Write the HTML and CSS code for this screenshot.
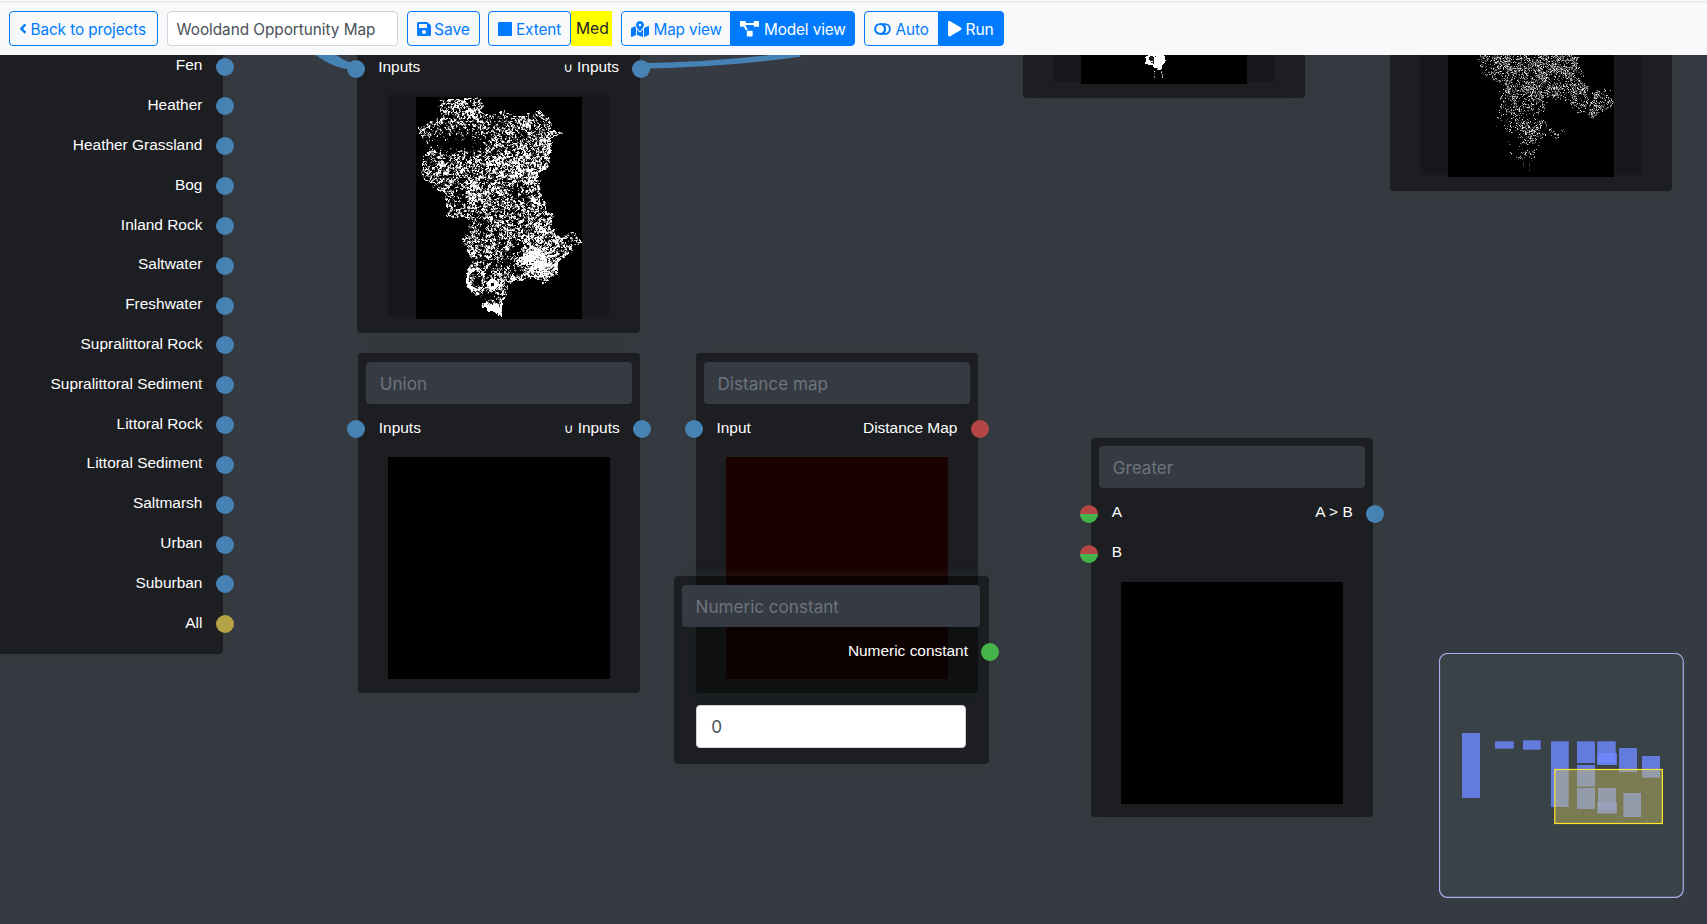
FILE: index.html
```html
<!DOCTYPE html>
<html lang="en">
<head>
<meta charset="utf-8">
<title>Wooldand Opportunity Map</title>
<link rel="stylesheet" href="styles.css">
</head>
<body>
<header class="toolbar">
  <button class="btn back"><svg class="ic" width="8" height="15.4" viewBox="0 0 256 512"><path d="M31.7 239l136-136c9.4-9.4 24.6-9.4 33.9 0l22.6 22.6c9.4 9.4 9.4 24.6 0 33.9L127.9 256l96.4 96.4c9.4 9.4 9.4 24.6 0 33.9L201.7 409c-9.4 9.4-24.6 9.4-33.9 0l-136-136c-9.5-9.4-9.5-24.6-.1-34z"/></svg><span>Back to projects</span></button>
  <div class="name">Wooldand Opportunity Map</div>
  <button class="btn save"><svg class="ic" width="14" height="16" viewBox="0 0 448 512"><path d="M433.941 129.941l-83.882-83.882A48 48 0 0 0 316.118 32H48C21.49 32 0 53.49 0 80v352c0 26.51 21.49 48 48 48h352c26.51 0 48-21.49 48-48V163.882a48 48 0 0 0-14.059-33.941zM224 416c-35.346 0-64-28.654-64-64 0-35.346 28.654-64 64-64s64 28.654 64 64c0 35.346-28.654 64-64 64zm96-304.52V212c0 6.627-5.373 12-12 12H76c-6.627 0-12-5.373-12-12V108c0-6.627 5.373-12 12-12h228.52c3.183 0 6.235 1.264 8.485 3.515l3.48 3.48A11.996 11.996 0 0 1 320 111.48z"/></svg><span>Save</span></button>
  <div class="group extent-group">
    <button class="btn extent"><svg class="ic" width="14" height="14" viewBox="0 0 14 14"><rect width="14" height="14" rx="0.8"/></svg><span>Extent</span></button>
    <span class="med">Med</span>
  </div>
  <div class="group views">
    <button class="btn mapview"><svg class="ic" width="18" height="16" viewBox="0 0 576 512"><path d="M288 0c-69.59 0-126 56.41-126 126 0 56.26 82.35 158.8 113.9 196.02 6.39 7.54 17.82 7.54 24.2 0C331.65 284.8 414 182.26 414 126 414 56.41 357.59 0 288 0zm0 168c-23.2 0-42-18.8-42-42s18.8-42 42-42 42 18.8 42 42-18.8 42-42 42zM20.12 215.95A32.006 32.006 0 0 0 0 245.66v250.32c0 11.32 11.43 19.06 21.94 14.86L160 448V214.92c-8.84-15.98-16.07-31.54-21.25-46.42L20.12 215.95zM288 359.67c-14.07 0-27.38-6.18-36.51-16.96-19.66-23.2-40.57-49.62-59.49-76.72v182l192 64V266c-18.92 27.09-39.82 53.52-59.49 76.72-9.13 10.77-22.44 16.95-36.51 16.95zm266.06-198.51L416 224v288l139.88-55.95A31.996 31.996 0 0 0 576 426.34V176.02c0-11.32-11.43-19.06-21.94-14.86z"/></svg><span>Map view</span></button>
    <button class="btn on modelview"><svg class="ic" width="19.5" height="15.6" viewBox="0 0 640 512"><path d="M384 320H256c-17.67 0-32 14.33-32 32v128c0 17.67 14.33 32 32 32h128c17.67 0 32-14.33 32-32V352c0-17.67-14.33-32-32-32zM192 32c0-17.67-14.33-32-32-32H32C14.33 0 0 14.33 0 32v128c0 17.67 14.33 32 32 32h95.72l73.16 128.04C211.98 300.98 232.4 288 256 288h.28L192 175.51V128h256V64H192V32zM608 0H480c-17.67 0-32 14.33-32 32v128c0 17.67 14.33 32 32 32h128c17.67 0 32-14.33 32-32V32c0-17.67-14.33-32-32-32z"/></svg><span>Model view</span></button>
  </div>
  <div class="group run-group">
    <button class="btn auto"><svg class="ic line" width="17" height="12" viewBox="0 0 17 12"><circle cx="6" cy="6" r="4.9"/><path d="M6 1.1H11a4.9 4.9 0 0 1 0 9.8H6M8.6 1.7a4.9 4.9 0 0 1 0 8.6"/></svg><span>Auto</span></button>
    <button class="btn on run"><svg class="ic" width="13.5" height="15.4" viewBox="0 0 448 512"><path d="M424.4 214.7L72.4 6.6C43.8-10.3 0 6.1 0 47.9V464c0 37.5 40.7 60.1 72.4 41.3l352-208c31.4-18.5 31.5-64.1 0-82.6z"/></svg><span>Run</span></button>
  </div>
</header>

<main class="editor">
  <svg class="wires" width="1707" height="869" viewBox="0 55 1707 869"><path d="M315 54.5C327 63.5 340 69.8 356 69.5V63.5C349 62.5 342 60 336 54.5Z"/><path class="line" d="M641 66Q725 64.5 800 54"/></svg>

  <section class="node layers">
    <div class="row"><span></span><span>Fen</span><i class="dot out"></i></div>
    <div class="row"><span></span><span>Heather</span><i class="dot out"></i></div>
    <div class="row"><span></span><span>Heather Grassland</span><i class="dot out"></i></div>
    <div class="row"><span></span><span>Bog</span><i class="dot out"></i></div>
    <div class="row"><span></span><span>Inland Rock</span><i class="dot out"></i></div>
    <div class="row"><span></span><span>Saltwater</span><i class="dot out"></i></div>
    <div class="row"><span></span><span>Freshwater</span><i class="dot out"></i></div>
    <div class="row"><span></span><span>Supralittoral Rock</span><i class="dot out"></i></div>
    <div class="row"><span></span><span>Supralittoral Sediment</span><i class="dot out"></i></div>
    <div class="row"><span></span><span>Littoral Rock</span><i class="dot out"></i></div>
    <div class="row"><span></span><span>Littoral Sediment</span><i class="dot out"></i></div>
    <div class="row"><span></span><span>Saltmarsh</span><i class="dot out"></i></div>
    <div class="row"><span></span><span>Urban</span><i class="dot out"></i></div>
    <div class="row"><span></span><span>Suburban</span><i class="dot out"></i></div>
    <div class="row"><span></span><span>All</span><i class="dot out gold"></i></div>
  </section>

  <section class="node union-a">
    <div class="title"></div>
    <div class="row"><i class="dot in"></i><span>Inputs</span><span><small>∪</small> Inputs</span><i class="dot out"></i></div>
    <div class="preview map"><canvas id="map-union" width="166" height="222"></canvas></div>
  </section>

  <section class="node result-a">
    <div class="preview map"><canvas id="map-area" width="166" height="222"></canvas></div>
  </section>

  <section class="node result-b">
    <div class="preview map"><canvas id="map-sparse" width="166" height="222"></canvas></div>
  </section>

  <section class="node union-b">
    <div class="title">Union</div>
    <div class="row"><i class="dot in"></i><span>Inputs</span><span><small>∪</small> Inputs</span><i class="dot out"></i></div>
    <div class="preview black"></div>
  </section>

  <section class="node distance">
    <div class="title">Distance map</div>
    <div class="row"><i class="dot in"></i><span>Input</span><span>Distance Map</span><i class="dot out red"></i></div>
    <div class="preview maroon"></div>
  </section>

  <section class="node numeric">
    <div class="title">Numeric constant</div>
    <div class="row"><span></span><span>Numeric constant</span><i class="dot out green"></i></div>
    <div class="value">0</div>
  </section>

  <section class="node greater">
    <div class="title">Greater</div>
    <div class="row"><i class="dot in split"></i><span>A</span><span>A &gt; B</span><i class="dot out"></i></div>
    <div class="row"><i class="dot in split"></i><span>B</span></div>
    <div class="preview black"></div>
  </section>

  <svg class="minimap" width="246" height="246" viewBox="1439 653 246 246">
    <rect class="mm-frame" x="1439.5" y="653.5" width="243.8" height="243.8" rx="8"/>
    <g class="mm-node">
      <rect x="1462" y="733" width="18" height="65"/>
      <rect x="1495" y="741.3" width="18.7" height="7.4"/>
      <rect x="1523" y="740.3" width="17.7" height="9.4"/>
      <rect x="1551" y="741.3" width="17.7" height="65.7"/>
      <rect x="1577" y="741.3" width="18" height="21.7"/>
      <rect x="1597.3" y="741.3" width="18.4" height="22"/>
      <rect x="1597.3" y="753" width="19.6" height="12"/>
      <rect x="1619" y="748" width="18" height="24"/>
      <rect x="1642" y="756" width="18" height="21.7"/>
      <rect x="1577" y="765" width="18" height="21.7"/>
      <rect x="1577" y="788" width="18" height="21"/>
      <rect x="1598" y="788" width="18" height="21.5"/>
      <rect x="1597.3" y="802" width="19.6" height="11.7"/>
      <rect x="1623.3" y="793" width="17.7" height="24"/>
    </g>
    <rect class="mm-view" x="1554.8" y="769.5" width="107.6" height="54"/>
  </svg>
</main>
<script src="maps.js"></script>
</body>
</html>
```

FILE: styles.css
```css
* { box-sizing: border-box; }
body {
  margin: 0;
  width: 1707px;
  height: 924px;
  overflow: hidden;
  display: flex;
  flex-direction: column;
  background: #363a42;
  font-family: Inter, "Liberation Sans", sans-serif;
}

/* toolbar */
.toolbar {
  height: 55px;
  flex: none;
  display: flex;
  align-items: flex-start;
  padding: 11.4px 9px 0;
  background: linear-gradient(#f8f9fa 1px, #e9ecef 1px, #e9ecef 3px, #f8f9fa 3px);
}
.group { display: flex; }
.btn, .name {
  height: 34.4px;
  border: 1px solid #007bff;
  border-radius: 4px;
  background: transparent;
  color: #007bff;
  font: 15.3px/30px Inter, sans-serif;
  letter-spacing: -0.1px;
  padding: 2.4px 0 0 9px;
  display: flex;
  align-items: center;
  gap: 4px;
  white-space: nowrap;
}
.btn.on { background: #007bff; color: #fff; }
.ic { fill: currentColor; flex: none; margin-top: -1.5px; }
.ic.line { fill: none; stroke: currentColor; stroke-width: 1.9; }
.back { width: 148.5px; padding-left: 8.5px; letter-spacing: -0.08px; }
.name { width: 231.5px; margin: 0 9px; border-color: #ced4da; background: #fff; color: #495057; letter-spacing: -0.02px; }
.save { width: 73px; margin-right: 8px; font-size: 15.7px; gap: 3px; }
.extent { width: 83px; }
.med { width: 41px; height: 34.4px; background: #ff0; color: #212529; font-size: 15.6px; line-height: 35.5px; padding-left: 5px; margin-right: 8.5px; }
.mapview { width: 110px; border-radius: 4px 0 0 4px; letter-spacing: -0.15px; gap: 5px; }
.modelview { width: 124.5px; border-radius: 0 4px 4px 0; margin-right: 9px; padding-left: 8px; gap: 5px; }
.auto { width: 74.5px; border-radius: 4px 0 0 4px; gap: 5px; padding-left: 8.5px; }
.run { width: 65.5px; border-radius: 0 4px 4px 0; padding-left: 8.5px; font-size: 15.6px; }

/* graph canvas */
.editor { position: relative; flex: 1; overflow: hidden; }
.wires { position: absolute; left: 0; top: 0; z-index: 1; pointer-events: none; }
.wires path { fill: #4682b4; }
.wires .line { fill: none; stroke: #4682b4; stroke-width: 5.6; }

.node {
  position: absolute;
  width: 282.7px;
  padding: 8.5px 8.5px 13.8px;
  border-radius: 4px;
  background: rgba(2, 2, 3, 0.49);
  box-shadow: 0 2px 13px rgba(50, 58, 52, 0.75);
  color: #fff;
  font: 15.45px/18px "Liberation Sans", sans-serif;
}
.layers { left: -60px; top: -10px; width: 283.2px; padding: 1.6px 8.5px 9.7px; }
.union-a { left: 357.2px; top: -62.6px; }
.result-a { left: 1022.8px; top: -297px; }
.result-b { left: 1389.6px; top: -204px; }
.union-b { left: 357.8px; top: 298px; }
.distance { left: 695.5px; top: 298px; }
.numeric { left: 673.5px; top: 521px; width: 315.3px; padding-bottom: 16.5px; }
.greater { left: 1090.8px; top: 382.6px; }

.title {
  height: 42.2px;
  margin-bottom: 5.6px;
  border-radius: 4px;
  background: #363a42;
  color: #6c757d;
  font: 17.1px/43.4px Inter, sans-serif;
  padding-left: 13.5px;
}
.row {
  position: relative;
  height: 39.83px;
  display: flex;
  align-items: center;
  justify-content: space-between;
  padding: 0 12.3px 2.6px 12.5px;
}
.row small { font: 13px/1 "DejaVu Sans", sans-serif; }
.dot {
  position: absolute;
  top: 11px;
  width: 18px;
  height: 18px;
  border-radius: 50%;
  background: #4682b4;
}
.dot.in { left: -19.2px; }
.dot.out { right: -18.9px; }
.red { background: #b44646; }
.green { background: #46b44a; }
.gold { background: #b4a346; }
.split { background: linear-gradient(#b44646 50%, #46b44a 50%); }

.preview { width: 221.6px; height: 222px; margin: 8.1px auto 0; }
.black { background: #000; }
.maroon { background: #1b0000; }
.map { display: flex; justify-content: center; background: #17181b; height: 222px; margin-top: 6.5px; }
.map canvas { display: block; flex: none; width: 166px; height: 222px; margin-top: 2px; margin-bottom: -2px; }
.union-a { height: 340.6px; }
.result-a, .result-b { height: 340px; padding-top: 95px; }
.result-b { height: 340.3px; }
.value {
  width: 270px;
  height: 42.5px;
  margin: 33px auto 0;
  border: 1px solid #ced4da;
  border-radius: 4px;
  background: #fff;
  color: #495057;
  font: 17.2px/41px Inter, sans-serif;
  padding-left: 14px;
}

/* overview */
.minimap { position: absolute; left: 1439px; top: 598px; }
.mm-frame { fill: #384247; stroke: #a8aeea; stroke-width: 1.2; }
.mm-node rect { fill: rgba(110, 136, 255, 0.82); }
.mm-view { fill: rgba(215, 200, 100, 0.42); stroke: #ffe52f; stroke-width: 1.2; }
```

FILE: maps.js
```js
// Deterministic hash in [0, 1)
function hash(x, y, s) {
  let h = (x * 374761393 + y * 668265263 + s * 1274126177) | 0;
  h = Math.imul(h ^ (h >>> 13), 1274126177);
  h = Math.imul(h ^ (h >>> 15), 2246822519);
  return ((h ^ (h >>> 16)) >>> 0) / 4294967296;
}

// Smooth value noise
function noise(x, y, s) {
  const xi = Math.floor(x), yi = Math.floor(y);
  let u = x - xi, v = y - yi;
  u = u * u * (3 - 2 * u);
  v = v * v * (3 - 2 * v);
  const a = hash(xi, yi, s), b = hash(xi + 1, yi, s);
  const c = hash(xi, yi + 1, s), d = hash(xi + 1, yi + 1, s);
  return (a + (b - a) * u) * (1 - v) + (c + (d - c) * u) * v;
}

function inside(poly, x, y) {
  let hit = false;
  for (let i = 0, j = poly.length - 1; i < poly.length; j = i++) {
    const [ax, ay] = poly[i], [bx, by] = poly[j];
    if ((ay > y) !== (by > y) && x < (bx - ax) * (y - ay) / (by - ay) + ax) hit = !hit;
  }
  return hit;
}

function bump(x, y, cx, cy, rx, ry) {
  return Math.exp(-(((x - cx) / rx) ** 2 + ((y - cy) / ry) ** 2));
}

function paint(id, shade) {
  const ctx = document.getElementById(id).getContext('2d');
  const img = ctx.createImageData(166, 222);
  for (let y = 0; y < 222; y++) {
    for (let x = 0; x < 166; x++) {
      const v = Math.max(0, Math.min(255, shade(x, y) * 255));
      const k = (y * 166 + x) * 4;
      img.data[k] = img.data[k + 1] = img.data[k + 2] = v;
      img.data[k + 3] = 255;
    }
  }
  ctx.putImageData(img, 0, 0);
}

const region = [[21,3],[31,2],[41,3],[56,0],[67,3],[65,16],[78,17],[88,13],[98,18],[115,16],[123,14],[134,23],[135,32],[146,36],[135,41],[134,69],[123,76],[125,99],[129,104],[128,112],[137,116],[135,129],[140,139],[158,135],[165,146],[151,158],[140,166],[141,176],[128,186],[115,181],[98,184],[92,188],[85,206],[85,220],[65,209],[61,198],[50,188],[48,173],[55,166],[45,143],[55,124],[48,121],[31,120],[29,96],[18,91],[5,78],[6,63],[13,49],[0,30],[18,23],[26,20],[22,14]];

paint('map-union', (x, y) => {
  const wx = x + (noise(x / 3, y / 3, 5) - 0.5) * 4;
  const wy = y + (noise(x / 3, y / 3, 6) - 0.5) * 4;
  if (!inside(region, wx, wy)) return 0;
  let d = 0.02 + (noise(x / 6, y / 6, 3) - 0.5) * 0.26;
  d -= 0.36 * bump(x, y, 50, 46, 27, 11) + 0.2 * bump(x, y, 20, 42, 14, 8);
  d -= 0.3 * bump(x, y, 88, 163, 8, 7) + 0.24 * bump(x, y, 98, 95, 10, 8);
  d -= 0.22 * bump(x, y, 42, 95, 8, 11) + 0.2 * bump(x, y, 65, 130, 6, 8);
  d -= 0.2 * bump(x, y, 85, 22, 14, 7) + 0.25 * bump(x, y, 102, 150, 8, 8);
  d -= 0.25 * bump(x, y, 62, 185, 5, 11) + 0.25 * bump(x, y, 103, 172, 8, 6);
  d += 0.45 * bump(x, y, 121, 163, 17, 14) + 0.6 * bump(x, y, 74, 212, 12, 5);
  d += 0.08 * bump(x, y, 95, 75, 40, 20) + 0.06 * bump(x, y, 125, 125, 15, 20);
  d += 0.2 * bump(x, y, 87, 195, 4, 10) - 0.3 * bump(x, y, 71, 200, 9, 4);
  const core = Math.hypot(x - 76, y - 187);
  if (core < 1.8) return 0;
  if (core < 5.5) d += 0.5;
  const arc = Math.abs(Math.hypot(x - 59, (y - 182) * 0.8) - 8);
  if (arc < 1.5) d += 0.3;
  const n = 0.62 * noise(x / 1.6, y / 1.6, 1) + 0.38 * hash(x, y, 2);
  return (n + d - 0.44) * 4;
});

const sparse = [[29,90],[127,90],[128,111],[136,115],[136,128],[139,138],[136,158],[129,156],[118,144],[99,141],[92,161],[100,175],[119,175],[115,182],[92,182],[89,191],[82,208],[75,208],[64,198],[60,185],[52,175],[50,138],[57,125],[32,120]];
const islet = [[145,138],[155,135],[165,146],[160,154],[145,161],[140,158]];

paint('map-sparse', (x, y) => {
  const wx = x + (noise(x / 3, y / 3, 15) - 0.5) * 9;
  const wy = y + (noise(x / 3, y / 3, 16) - 0.5) * 9;
  if (y > 207 && y < 216 && (x === 81 || (x === 75 && y < 212))) return 0.4 * hash(x, y, 14);
  if (!inside(sparse, wx, wy) && !inside(islet, wx, wy)) return 0;
  let p = 0.5 - Math.max(0, y - 115) * 0.0036 + (noise(x / 6, y / 6, 13) - 0.5) * 0.8;
  p += 0.12 * bump(x, y, 100, 110, 35, 20) - 0.3 * bump(x, y, 66, 182, 8, 8);
  if (x > 140) p += 0.12;
  if (hash(x, y, 11) > p) return 0;
  return 0.2 + 0.75 * Math.pow(hash(x, y, 12), 1.7);
});

const tip = [[68,180],[81,180],[82,190],[84,199],[81,203],[79,208],[75,207],[71,203],[64,201],[63,195],[67,193]];

paint('map-area', (x, y) => {
  const wx = x + (noise(x / 2, y / 2, 25) - 0.5) * 3;
  if (bump(x, y, 70, 196, 3, 3) > 0.45) return 0.1;
  if (inside(tip, wx, y)) return noise(x / 2, y / 2, 21) > 0.12 ? 1 : 0.15;
  if (y > 208 && y < 216 && (x === 73 || x === 80 + ((y - 208) >> 2))) return hash(x, y, 22);
  return 0;
});
```
